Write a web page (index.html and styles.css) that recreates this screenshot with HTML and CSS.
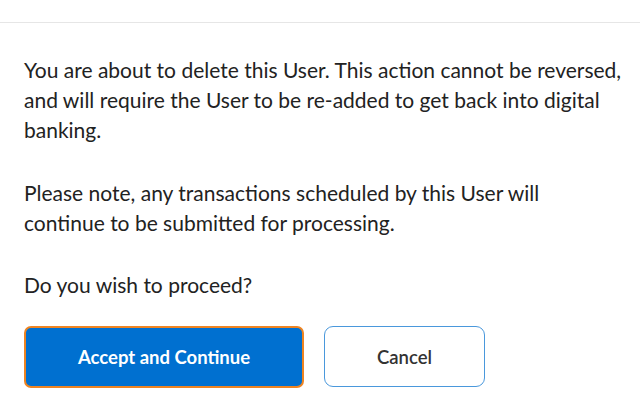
FILE: index.html
```html
<!DOCTYPE html>
<html>
<head>
<meta charset="utf-8">
<link rel="stylesheet" href="styles.css">
</head>
<body>
<div class="topbar"></div>
<div class="content">
  <p class="para">You are about to delete this User. This action cannot be reversed, and will require the User to be re-added to get back into digital banking.</p>
  <p class="para note">Please note, any transactions scheduled by this User will continue to be submitted for processing.</p>
  <p class="para question">Do you wish to proceed?</p>
  <div class="actions">
    <button class="btn btn-primary">Accept and Continue</button>
    <button class="btn btn-secondary">Cancel</button>
  </div>
</div>
</body>
</html>
```
FILE: styles.css
```css
html, body {
  margin: 0;
  padding: 0;
  background: #ffffff;
}
body {
  font-family: Lato, "Open Sans", sans-serif;
  color: #222222;
}
.topbar {
  height: 22px;
  border-bottom: 1px solid #e6e6e6;
}
.content {
  padding: 32px 0 0 24px;
}
.para {
  margin: 0 0 33px 0;
  font-size: 21px;
  line-height: 30px;
  max-width: 608px;
}
.para.note {
  max-width: 560px;
}
.para.question {
  margin-top: -1px;
  margin-bottom: 26px;
}
.actions {
  display: flex;
  gap: 20px;
}
.btn {
  font-family: Lato, "Open Sans", sans-serif;
  font-size: 18.5px;
  height: 62px;
  border-radius: 7px;
  cursor: pointer;
}
.btn-primary {
  width: 280px;
  background: #0070d0;
  color: #ffffff;
  font-weight: 700;
  border: 2px solid #ee8422;
}
.btn-secondary {
  width: 161px;
  height: 61px;
  background: #ffffff;
  color: #333333;
  font-weight: 600;
  border: 1.5px solid #4a98dc;
  border-radius: 9px;
}
```
